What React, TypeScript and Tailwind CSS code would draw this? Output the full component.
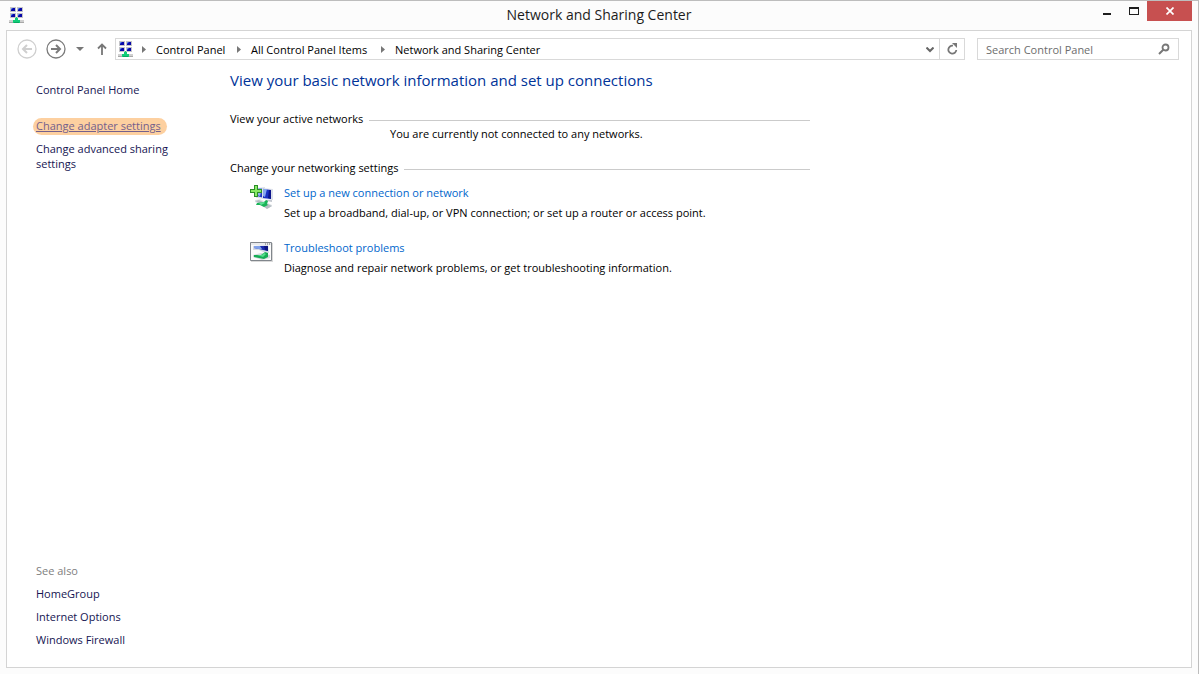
import type { ReactNode } from "react";

const crumbs = [
	{ label: "Control Panel", className: "w-[72px]" },
	{ label: "All Control Panel Items", className: "w-[121px]" },
	{ label: "Network and Sharing Center", className: "w-[150px]" },
];

const seeAlso = ["HomeGroup", "Internet Options", "Windows Firewall"];

const tasks = [
	{
		title: "Set up a new connection or network",
		text: "Set up a broadband, dial-up, or VPN connection; or set up a router or access point.",
		icon: <NewConnectionIcon />,
	},
	{
		title: "Troubleshoot problems",
		text: "Diagnose and repair network problems, or get troubleshooting information.",
		icon: <TroubleshootIcon />,
	},
];

function NetworkIcon() {
	const screens = [
		[1, 0],
		[8, 0],
		[1, 6],
		[8, 6],
	];
	return (
		<svg
			className="h-4 w-[15px] shrink-0"
			viewBox="0 0 15 16"
			shapeRendering="crispEdges"
			aria-hidden="true"
		>
			{screens.map(([x, y]) => (
				<g key={`${x}-${y}`}>
					<rect x={x} y={y} width="6" height="5" fill="#c4c4c8" />
					<rect x={x + 1} y={y + 1} width="4" height="3" fill="#0808a8" />
					<rect x={x + 1} y={y + 1} width="1" height="1" fill="#7090e8" />
					<rect x={x + 1} y={y + 2} width="1" height="1" fill="#2848d0" />
					<rect x={x + 2} y={y + 1} width="1" height="1" fill="#2848d0" />
				</g>
			))}
			<rect x="0" y="13" width="15" height="2" fill="#d0d0d0" />
			<rect x="0" y="15" width="15" height="1" fill="#a8a8a8" />
			<path d="M7 10h1v1h1v2h2v3H4v-3h2v-2h1z" fill="#10cc78" />
			<rect x="5" y="15" width="5" height="1" fill="#08a860" />
		</svg>
	);
}

function NewConnectionIcon() {
	return (
		<svg className="h-6 w-6" viewBox="0 0 24 24" aria-hidden="true">
			<path d="M6 3l9-1v12l-9-1z" fill="#dde1ea" />
			<path d="M7 4l7-1v10l-7-2z" fill="#2438bc" />
			<path d="M7 4l5-1-2 8-3-1z" fill="#8fb0f2" />
			<path d="M12 3l11 1v11l-11-1z" fill="#dde1ea" />
			<path d="M13 4l8 1v9l-8-1z" fill="#1c30c4" />
			<path d="M13 4h4l-2 8-2-1z" fill="#86a6f0" />
			<path d="M19 5l2 0v9l-3-1z" fill="#0c148c" />
			<path d="M16 15l6 0v2l-6-1z" fill="#c3c8d0" />
			<path d="M5 15l5-1 12 6v1l-5 3L5 17z" fill="#e2e6e9" />
			<path d="M5 16l4-1 4 2-4 1z" fill="#b4bcc2" />
			<path d="M13 21l5-2 4 2-5 3z" fill="#b4bcc2" />
			<path d="M7 18l7-1 2-2 2 1-1 3 1 1-4 2-4-2-4 0z" fill="#18b458" />
			<path d="M9 18l5-1 1 1-4 2z" fill="#5fe096" />
			<path d="M4 0h4v4h4v4H8v4H4V8H0V4h4z" fill="#2c8f28" />
			<path d="M5 1h2v4h4v2H7v4H5V7H1V5h4z" fill="#8aea66" />
		</svg>
	);
}

function TroubleshootIcon() {
	return (
		<svg className="h-6 w-6" viewBox="0 0 24 24" aria-hidden="true">
			<path d="M1 3h22v19H1z" fill="#dadada" />
			<path d="M0.5 2.500h21v18h-21z" fill="#fbfbfb" stroke="#81868c" />
			<path d="M1 3h20v2H1z" fill="#e8eaed" />
			<path d="M15 4h1M17 4h1M19 4h1" stroke="#666" />
			<path d="M3 6l15-1 1 8-6-1-4-2-6 0z" fill="#d5dae4" />
			<path d="M5 6h13v5l-5-1-4-1-5-1z" fill="#1a2cae" />
			<path d="M4 6h6l2 3-4 0-4-1z" fill="#7fa0ea" />
			<path d="M14 6h4v5l-3-1z" fill="#0c1480" />
			<path d="M3 15l8-2 9 2v3l-8 2-9-3z" fill="#d3d8db" />
			<path d="M4 15l7 0 4-3 3 1v4l-4 2-5-1-5-1z" fill="#16ac55" />
			<path d="M7 15h5l2-2 2 1-3 3z" fill="#55dd8b" />
		</svg>
	);
}

function Arrow({ back }: { back?: boolean }) {
	return (
		<svg
			className="size-5"
			viewBox="0 0 20 20"
			fill="none"
			stroke={back ? "#cfcfcf" : "#7b7b7b"}
			aria-hidden="true"
		>
			<circle cx="10" cy="10" r="9" strokeWidth="1.3" />
			<path
				d={back ? "M15 10H6M10 6l-4 4 4 4" : "M5 10h9M10 6l4 4-4 4"}
				strokeWidth="2"
			/>
		</svg>
	);
}

function Section({ title, children }: { title: string; children: ReactNode }) {
	return (
		<section>
			<div className="flex items-center gap-[6px]">
				<h3>{title}</h3>
				<div className="mt-1 h-px grow bg-[#cbcbcb]" />
			</div>
			{children}
		</section>
	);
}

function TitleBar() {
	return (
		<header className="grid h-[29px] shrink-0 grid-cols-[1fr_auto_1fr]">
			<div className="pt-[6px] pl-[9px]">
				<NetworkIcon />
			</div>
			<h1 className="pt-[3px] text-[14px] leading-[22px] whitespace-nowrap text-[#1c1c1c]">
				Network and Sharing Center
			</h1>
			<div className="flex h-5 justify-end pr-[6px]">
				<button type="button" aria-label="Minimize" className="flex w-7 justify-center">
					<svg className="h-5 w-7" viewBox="0 0 28 20" aria-hidden="true">
						<path d="M11 12h8v2h-8z" fill="#1e1e1e" />
					</svg>
				</button>
				<button type="button" aria-label="Maximize" className="w-[27px]">
					<svg className="h-5 w-[27px]" viewBox="0 0 27 20" aria-hidden="true">
						<path
							d="M9 6h10v8H9zM10 8v5h8V8z"
							fill="#1e1e1e"
							fillRule="evenodd"
						/>
					</svg>
				</button>
				<button
					type="button"
					aria-label="Close"
					className="flex w-[45px] items-center justify-center bg-[#c75050]"
				>
					<svg className="size-2" viewBox="0 0 8 8" aria-hidden="true">
						<path d="M0.500 0.500l7 7M7.500 0.500l-7 7" stroke="#fff" strokeWidth="1.700" />
					</svg>
				</button>
			</div>
		</header>
	);
}

function Toolbar() {
	return (
		<div className="flex items-center pt-[7px] pr-3 pl-[10px]">
			<button type="button" aria-label="Back" className="mr-[9px]">
				<Arrow back />
			</button>
			<button type="button" aria-label="Forward">
				<Arrow />
			</button>
			<button type="button" aria-label="Recent locations" className="ml-[10px]">
				<svg className="h-[5px] w-2" viewBox="0 0 8 5" aria-hidden="true">
					<path d="M0 0h8L4 4z" fill="#777" />
				</svg>
			</button>
			<button type="button" aria-label="Up" className="mr-2 ml-[13px]">
				<svg
					className="h-3 w-[10px]"
					viewBox="0 0 10 12"
					fill="none"
					stroke="#777"
					strokeWidth="1.800"
					aria-hidden="true"
				>
					<path d="M5 12V2M1 5.500l4-4 4 4" />
				</svg>
			</button>
			<div className="flex h-[22px] grow border border-[#d9d9d9]">
				<nav aria-label="Address" className="flex grow items-center pl-[2px]">
					<NetworkIcon />
					{crumbs.map((crumb) => (
						<div key={crumb.label} className="flex items-center">
							<svg className="mr-[9px] ml-2 h-[7px] w-[6px]" viewBox="0 0 6 7" aria-hidden="true">
								<path d="M1 0v7l4-3.500z" fill="#777" />
							</svg>
							<a href="#" className={`${crumb.className} whitespace-nowrap`}>
								{crumb.label}
							</a>
						</div>
					))}
				</nav>
				<button type="button" aria-label="Previous locations" className="px-[5px]">
					<svg className="mt-px h-[6px] w-2" viewBox="0 0 8 6" aria-hidden="true">
						<path d="M0.500 0.500L4 4l3.500-3.500" fill="none" stroke="#666" strokeWidth="2" />
					</svg>
				</button>
				<button
					type="button"
					aria-label="Refresh"
					className="flex w-[25px] items-center justify-center border-l border-[#d9d9d9]"
				>
					<svg className="h-3 w-[11px]" viewBox="0 0 11 12" aria-hidden="true">
						<path
							d="M6 2.700A4 4 0 1 0 9.300 7"
							fill="none"
							stroke="#777"
							strokeWidth="1.800"
						/>
						<path d="M5 0h1l4 0v5z" fill="#777" />
					</svg>
				</button>
			</div>
			<div className="ml-3 flex h-[22px] w-[202px] items-center border border-[#d9d9d9] pr-2 pl-2">
				<input
					type="text"
					aria-label="Search Control Panel"
					placeholder="Search Control Panel"
					className="min-w-0 grow outline-none placeholder:text-[#6d6d6d]"
				/>
				<button type="button" aria-label="Search">
					<svg
						className="h-3 w-3"
						viewBox="0 0 12 12"
						fill="none"
						stroke="#777"
						aria-hidden="true"
					>
						<circle cx="7.500" cy="4.500" r="3" strokeWidth="1.800" />
						<path d="M5.500 6.500L1 11" strokeWidth="2" />
					</svg>
				</button>
			</div>
		</div>
	);
}

export default function App() {
	return (
		<div className="flex min-h-screen flex-col border-t border-r border-[#bdbdbd] bg-[#fcfcfc] font-['Open_Sans','Noto_Sans',sans-serif] text-[11px] leading-[15px] text-black">
			<TitleBar />
			<div className="mx-[6px] mb-[6px] flex grow flex-col border border-[#d4d4d4] bg-white">
				<Toolbar />
				<div className="flex grow">
					<aside className="ml-[29px] flex w-[194px] shrink-0 flex-col items-start pt-[22px] pb-5 text-[#151552]">
						<a href="#">Control Panel Home</a>
						<a
							href="#"
							className="mt-[21px] mb-[6px] -ml-[3px] rounded-full bg-[#fdd0a0] pr-[6px] pb-[2px] pl-[3px] text-[#74608c] underline"
						>
							Change adapter settings
						</a>
						<a href="#" className="w-[150px]">
							Change advanced sharing settings
						</a>
						<div className="mt-auto flex flex-col items-start gap-2">
							<h2 className="text-[#808080]">See also</h2>
							{seeAlso.map((label) => (
								<a key={label} href="#">
									{label}
								</a>
							))}
						</div>
					</aside>
					<main className="w-[580px] pt-2">
						<h2 className="mb-[19px] text-[15px] leading-6 text-[#003399]">
							View your basic network information and set up connections
						</h2>
						<Section title="View your active networks">
							<p className="mb-[19px] pl-40">
								You are currently not connected to any networks.
							</p>
						</Section>
						<Section title="Change your networking settings">
							<ul className="mt-[10px] flex flex-col gap-5 pl-5">
								{tasks.map((task) => (
									<li key={task.title} className="flex gap-[10px]">
										{task.icon}
										<div className="flex flex-col items-start gap-[5px]">
											<a href="#" className="text-[#0066cc]">
												{task.title}
											</a>
											<p>{task.text}</p>
										</div>
									</li>
								))}
							</ul>
						</Section>
					</main>
				</div>
			</div>
		</div>
	);
}
